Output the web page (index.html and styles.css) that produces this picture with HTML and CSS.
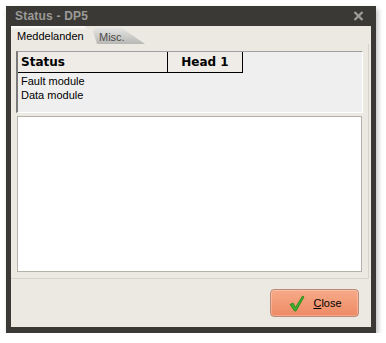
FILE: index.html
```html
<!DOCTYPE html>
<html>
<head>
<meta charset="utf-8">
<link rel="stylesheet" href="styles.css">
</head>
<body>
<div class="window">
  <div class="titlebar">
    <span class="title">Status - DP5</span>
    <svg class="x" width="11" height="10" viewBox="0 0 11 10"><path d="M1.5 1 L9.5 9 M9.5 1 L1.5 9" stroke="#9b9b97" stroke-width="2.4"/></svg>
  </div>
  <div class="client">
    <div class="tabs">
      <div class="tab active">Meddelanden</div>
      <div class="tab inactive"><span>Misc.</span></div>
    </div>
    <div class="panel">
      <div class="grid">
        <div class="ghead">
          <div class="hc c1">Status</div>
          <div class="hc c2">Head 1</div>
        </div>
        <div class="row">Fault module</div>
        <div class="row">Data module</div>
      </div>
      <div class="list"></div>
    </div>
    <div class="footer">
      <button class="btn">
        <svg width="16" height="17" viewBox="0 0 16 17"><path d="M1 9.5 L4 8 L6.5 12.5 L13.5 1 L15 2 L7 16 L5.5 16 Z" fill="#3ab02a" stroke="#23851a" stroke-width="0.8"/></svg>
        <span><u>C</u>lose</span>
      </button>
    </div>
  </div>
</div>
</body>
</html>
```
FILE: styles.css
```css
html, body { margin: 0; padding: 0; background: #fff; }
body { padding: 6px 0 0 6px; font-family: "Liberation Sans", Arial, sans-serif; font-size: 11px; color: #000; }
.window {
  box-sizing: border-box;
  width: 370px; height: 327px;
  background: #3a3935;
  padding: 0 5px 6px 5px;
  display: flex; flex-direction: column;
  box-shadow: 2px 3px 5px rgba(0,0,0,0.25);
}
.titlebar {
  height: 20px; display: flex; align-items: center; justify-content: space-between;
  padding: 0 7px 0 4px;
}
.title { font-weight: bold; font-size: 12px; color: #9b9b97; letter-spacing: 0.2px; }
.client { flex: 1; background: #ece9e3; display: flex; flex-direction: column; }
.tabs { height: 18px; display: flex; align-items: flex-end; }
.tab { height: 18px; box-sizing: border-box; display: flex; align-items: center; }
.tab.active { width: 82px; padding: 2px 0 0 6px; background: linear-gradient(#ffffff 0, #ece9e3 4px); clip-path: polygon(0 0, 74px 0, 82px 100%, 0 100%); }
.tab.inactive { width: 52px; height: 16px; padding: 1px 0 0 6px; color: #4a4a4a; background: linear-gradient(#e4e4e2, #b7b7b4); clip-path: polygon(3px 0, 29px 0, 52px 100%, 4px 100%, 0 3px); }
.panel {
  flex: 1; margin: 0 2px 0 0; padding: 7px 5px 6px 5px;
  border-bottom: 1px solid #d6d3cc; border-right: 1px solid #d6d3cc;
  display: flex; flex-direction: column; gap: 3px;
}
.grid {
  height: 62px; box-sizing: border-box; background: #efefef;
  border-top: 1px solid #a0a0a0; border-left: 2px solid #7a7a7a;
  border-right: 1px solid #fff; border-bottom: 1px solid #fff;
}
.ghead { display: flex; height: 21px; }
.hc { box-sizing: border-box; height: 21px; background: #efebe6; border-bottom: 1px solid #000; border-right: 1px solid #000; font-family: "DejaVu Sans", sans-serif; font-weight: bold; font-size: 12px; display: flex; align-items: center; }
.c1 { width: 150px; padding-left: 3px; }
.c2 { width: 75px; justify-content: center; }
.row { height: 14px; line-height: 14px; padding-left: 3px; }
.ghead + .row { margin-top: 1px; }
.list { flex: 1; background: #fff; border: 1px solid #b5b2ab; margin: 0 1px; }
.footer { height: 48px; display: flex; align-items: center; justify-content: flex-end; padding-right: 12px; }
.btn {
  width: 89px; height: 28px; box-sizing: border-box;
  border: 1px solid #bd8a78; border-radius: 4px;
  background: linear-gradient(#f7aa88, #ee8a65);
  font-family: "Liberation Sans", Arial, sans-serif; font-size: 11px; color: #000;
  display: flex; align-items: center; justify-content: center; gap: 8px; padding: 0 0 0 2px;
  box-shadow: inset 0 0 0 1px rgba(255,255,255,0.25);
}
```
